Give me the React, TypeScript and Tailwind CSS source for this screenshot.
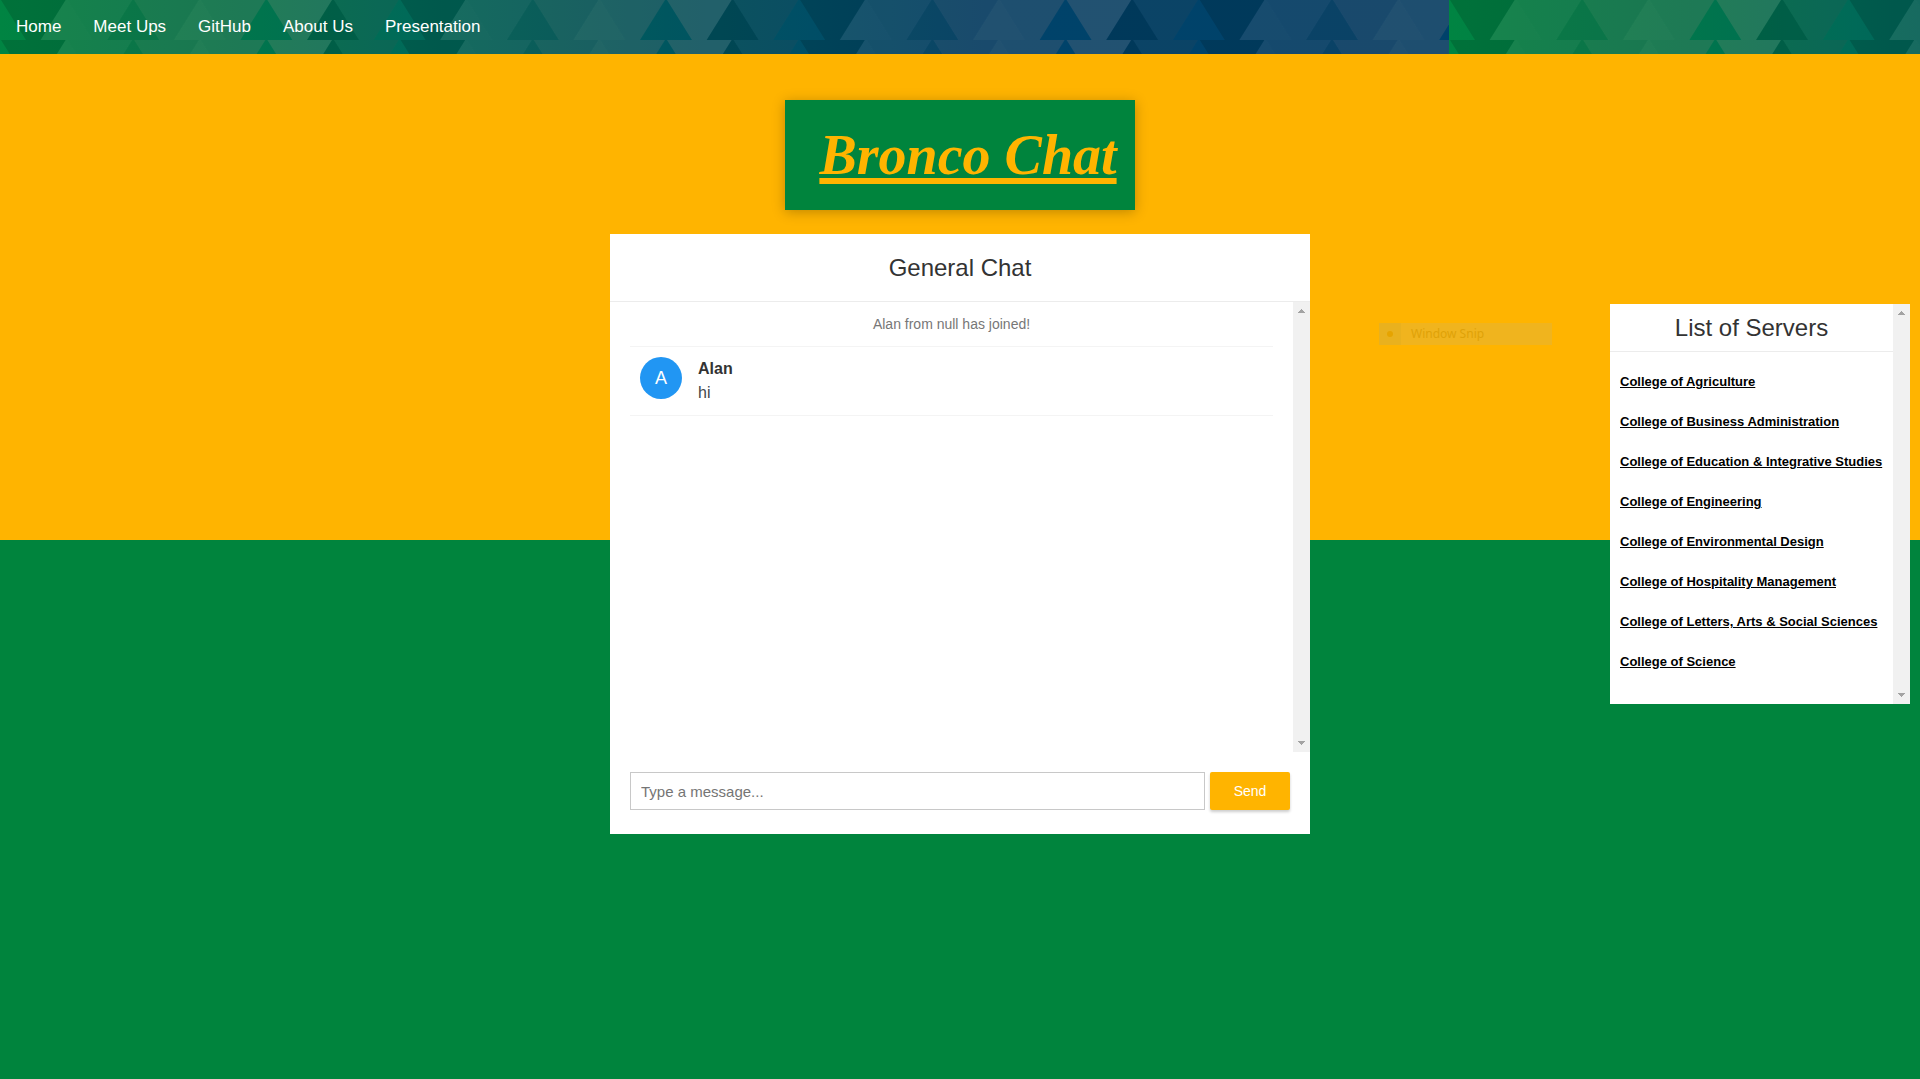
import React from "react";

const NAV_LINKS = ["Home", "Meet Ups", "GitHub", "About Us", "Presentation"];

const SERVERS = [
  "College of Agriculture",
  "College of Business Administration",
  "College of Education & Integrative Studies",
  "College of Engineering",
  "College of Environmental Design",
  "College of Hospitality Management",
  "College of Letters, Arts & Social Sciences",
  "College of Science",
];

/* Tints repeat every six triangles: [upright triangle, inverted gap to its right] */
const TINTS: [string, string][] = [
  ["rgba(0,0,0,0)", "rgba(0,0,0,0.14)"],
  ["rgba(210,150,150,0.11)", "rgba(210,140,140,0.1)"],
  ["rgba(100,70,70,0.1)", "rgba(190,120,120,0.13)"],
  ["rgba(220,160,150,0.15)", "rgba(210,150,145,0.14)"],
  ["rgba(0,0,0,0)", "rgba(230,165,155,0.15)"],
  ["rgba(0,0,0,0.15)", "rgba(90,70,75,0.12)"],
];

const STEP = 66.6;

function TriangleRow() {
  return (
    <>
      {Array.from({ length: 23 }, (_, k) => {
        const x = k * STEP;
        const [up, down] = TINTS[k % 6];
        return (
          <g key={k}>
            <polygon points={`${x - 1},0 ${x + 1},0 ${x + 26},40 ${x - 26},40`} fill={up} />
            <polygon
              points={`${x + 1},0 ${x + STEP - 1},0 ${x + STEP - 26},40 ${x + 26},40`}
              fill={down}
            />
          </g>
        );
      })}
    </>
  );
}

function NavPattern() {
  return (
    <svg className="absolute inset-0 h-full w-full" aria-hidden="true">
      <defs>
        <linearGradient id="nav-fade" gradientUnits="userSpaceOnUse" x1="0" y1="0" x2="1449" y2="0">
          <stop offset="0" stopColor="#008442" />
          <stop offset="0.18" stopColor="#00744d" />
          <stop offset="0.28" stopColor="#006a58" />
          <stop offset="0.46" stopColor="#00565f" />
          <stop offset="0.56" stopColor="#004e66" />
          <stop offset="0.68" stopColor="#00436a" />
          <stop offset="1" stopColor="#00426a" />
        </linearGradient>
        <pattern id="nav-tile" patternUnits="userSpaceOnUse" width="1449" height="80">
          <rect width="1449" height="80" fill="url(#nav-fade)" />
          <TriangleRow />
          <g transform="translate(0 40)">
            <TriangleRow />
          </g>
        </pattern>
      </defs>
      <rect width="100%" height="100%" fill="url(#nav-tile)" />
    </svg>
  );
}

function Scrollbar() {
  return (
    <div
      className="flex w-[17px] shrink-0 flex-col items-center justify-between bg-[#f1f1f1] py-[7px]"
      aria-hidden="true"
    >
      <svg width="7" height="4" viewBox="0 0 7 4" shapeRendering="crispEdges">
        <path d="M3 0h1v1h1v1h1v1h1v1H0V3h1V2h1V1h1z" fill="#a3a3a3" />
      </svg>
      <svg width="7" height="4" viewBox="0 0 7 4" shapeRendering="crispEdges">
        <path d="M0 0h7v1H6v1H5v1H4v1H3V3H2V2H1V1H0z" fill="#a3a3a3" />
      </svg>
    </div>
  );
}

function ChatPanel() {
  return (
    <section className="bg-white">
      <h2 className="border-b border-[#ececec] py-5 text-center text-[24px] leading-[27px]">
        General Chat
      </h2>
      <div className="flex h-[450px]">
        <ul className="min-w-0 flex-1 px-5">
          <li className="border-b border-[#f4f4f4] py-[10px] text-center text-[14px] leading-6 text-[#777]">
            Alan from null has joined!
          </li>
          <li className="flex gap-4 border-b border-[#f4f4f4] px-[10px] py-[10px]">
            <span className="flex size-[42px] items-center justify-center rounded-full bg-[#2196f3] text-[18px] text-white">
              A
            </span>
            <div className="text-[16px] leading-6">
              <p className="font-bold">Alan</p>
              <p className="text-[#43464a]">hi</p>
            </div>
          </li>
        </ul>
        <Scrollbar />
      </div>
      <form
        className="flex gap-[5px] px-5 pt-5 pb-6"
        onSubmit={(event) => event.preventDefault()}
      >
        <input
          type="text"
          aria-label="Message"
          placeholder="Type a message..."
          className="h-[38px] min-w-0 flex-1 border border-[#c8c8c8] px-[10px] text-[15px] placeholder:text-[#757575]"
        />
        <button
          type="submit"
          className="h-[38px] w-20 rounded-[2px] bg-[#ffb400] text-[14px] text-white shadow-[0_2px_3px_rgba(0,0,0,0.2)]"
        >
          Send
        </button>
      </form>
    </section>
  );
}

function ServerList() {
  return (
    <aside className="mt-[70px] mr-[10px] flex h-[400px] w-[300px] justify-self-end bg-white">
      <div className="min-w-0 flex-1">
        <h2 className="border-b border-[#ececec] py-[10px] text-center text-[24px] leading-[27px]">
          List of Servers
        </h2>
        <ul className="pt-[10px] pl-[10px]">
          {SERVERS.map((name) => (
            <li key={name} className="flex h-10 items-center whitespace-nowrap text-[13px]">
              <a href="#" className="font-bold text-black underline">
                {name}
              </a>
            </li>
          ))}
        </ul>
      </div>
      <Scrollbar />
    </aside>
  );
}

export default function App() {
  return (
    <div className="min-h-screen bg-[linear-gradient(#ffb400_calc(50%+1px),#00843d_calc(50%+1px))] font-['Liberation_Sans',Arial,sans-serif] text-[#333]">
      <nav className="relative">
        <NavPattern />
        <div className="relative flex">
          {NAV_LINKS.map((label) => (
            <a key={label} href="#" className="px-4 py-[14px] text-[17px] leading-[26px] text-white">
              {label}
            </a>
          ))}
        </div>
      </nav>

      <main>
        <header className="flex justify-center pt-[46px] pb-6">
          <h1 className="flex h-[110px] w-[350px] items-center justify-center bg-[#00843d] pl-4 font-['Brush_Script_MT','Liberation_Serif',serif] text-[56px] font-bold text-[#ffb400] italic underline decoration-[6px] underline-offset-4 shadow-[0_2px_12px_rgba(0,0,0,0.25)]">
            Bronco Chat
          </h1>
        </header>

        <div className="grid grid-cols-[1fr_700px_1fr] items-start">
          <div />
          <ChatPanel />
          <div className="relative grid">
            <div className="absolute top-[89px] left-[69px] flex h-[22px] w-[173px] items-center bg-[#f0b41e] font-['Noto_Sans',sans-serif] text-[12px] text-[#dfa208]">
              <span className="flex h-full w-[22px] items-center justify-center bg-[#e9b11e]">
                <span className="size-[6px] rounded-full bg-[#e6a400]" />
              </span>
              <span className="pl-[10px]">Window Snip</span>
            </div>
            <ServerList />
          </div>
        </div>
      </main>
    </div>
  );
}
